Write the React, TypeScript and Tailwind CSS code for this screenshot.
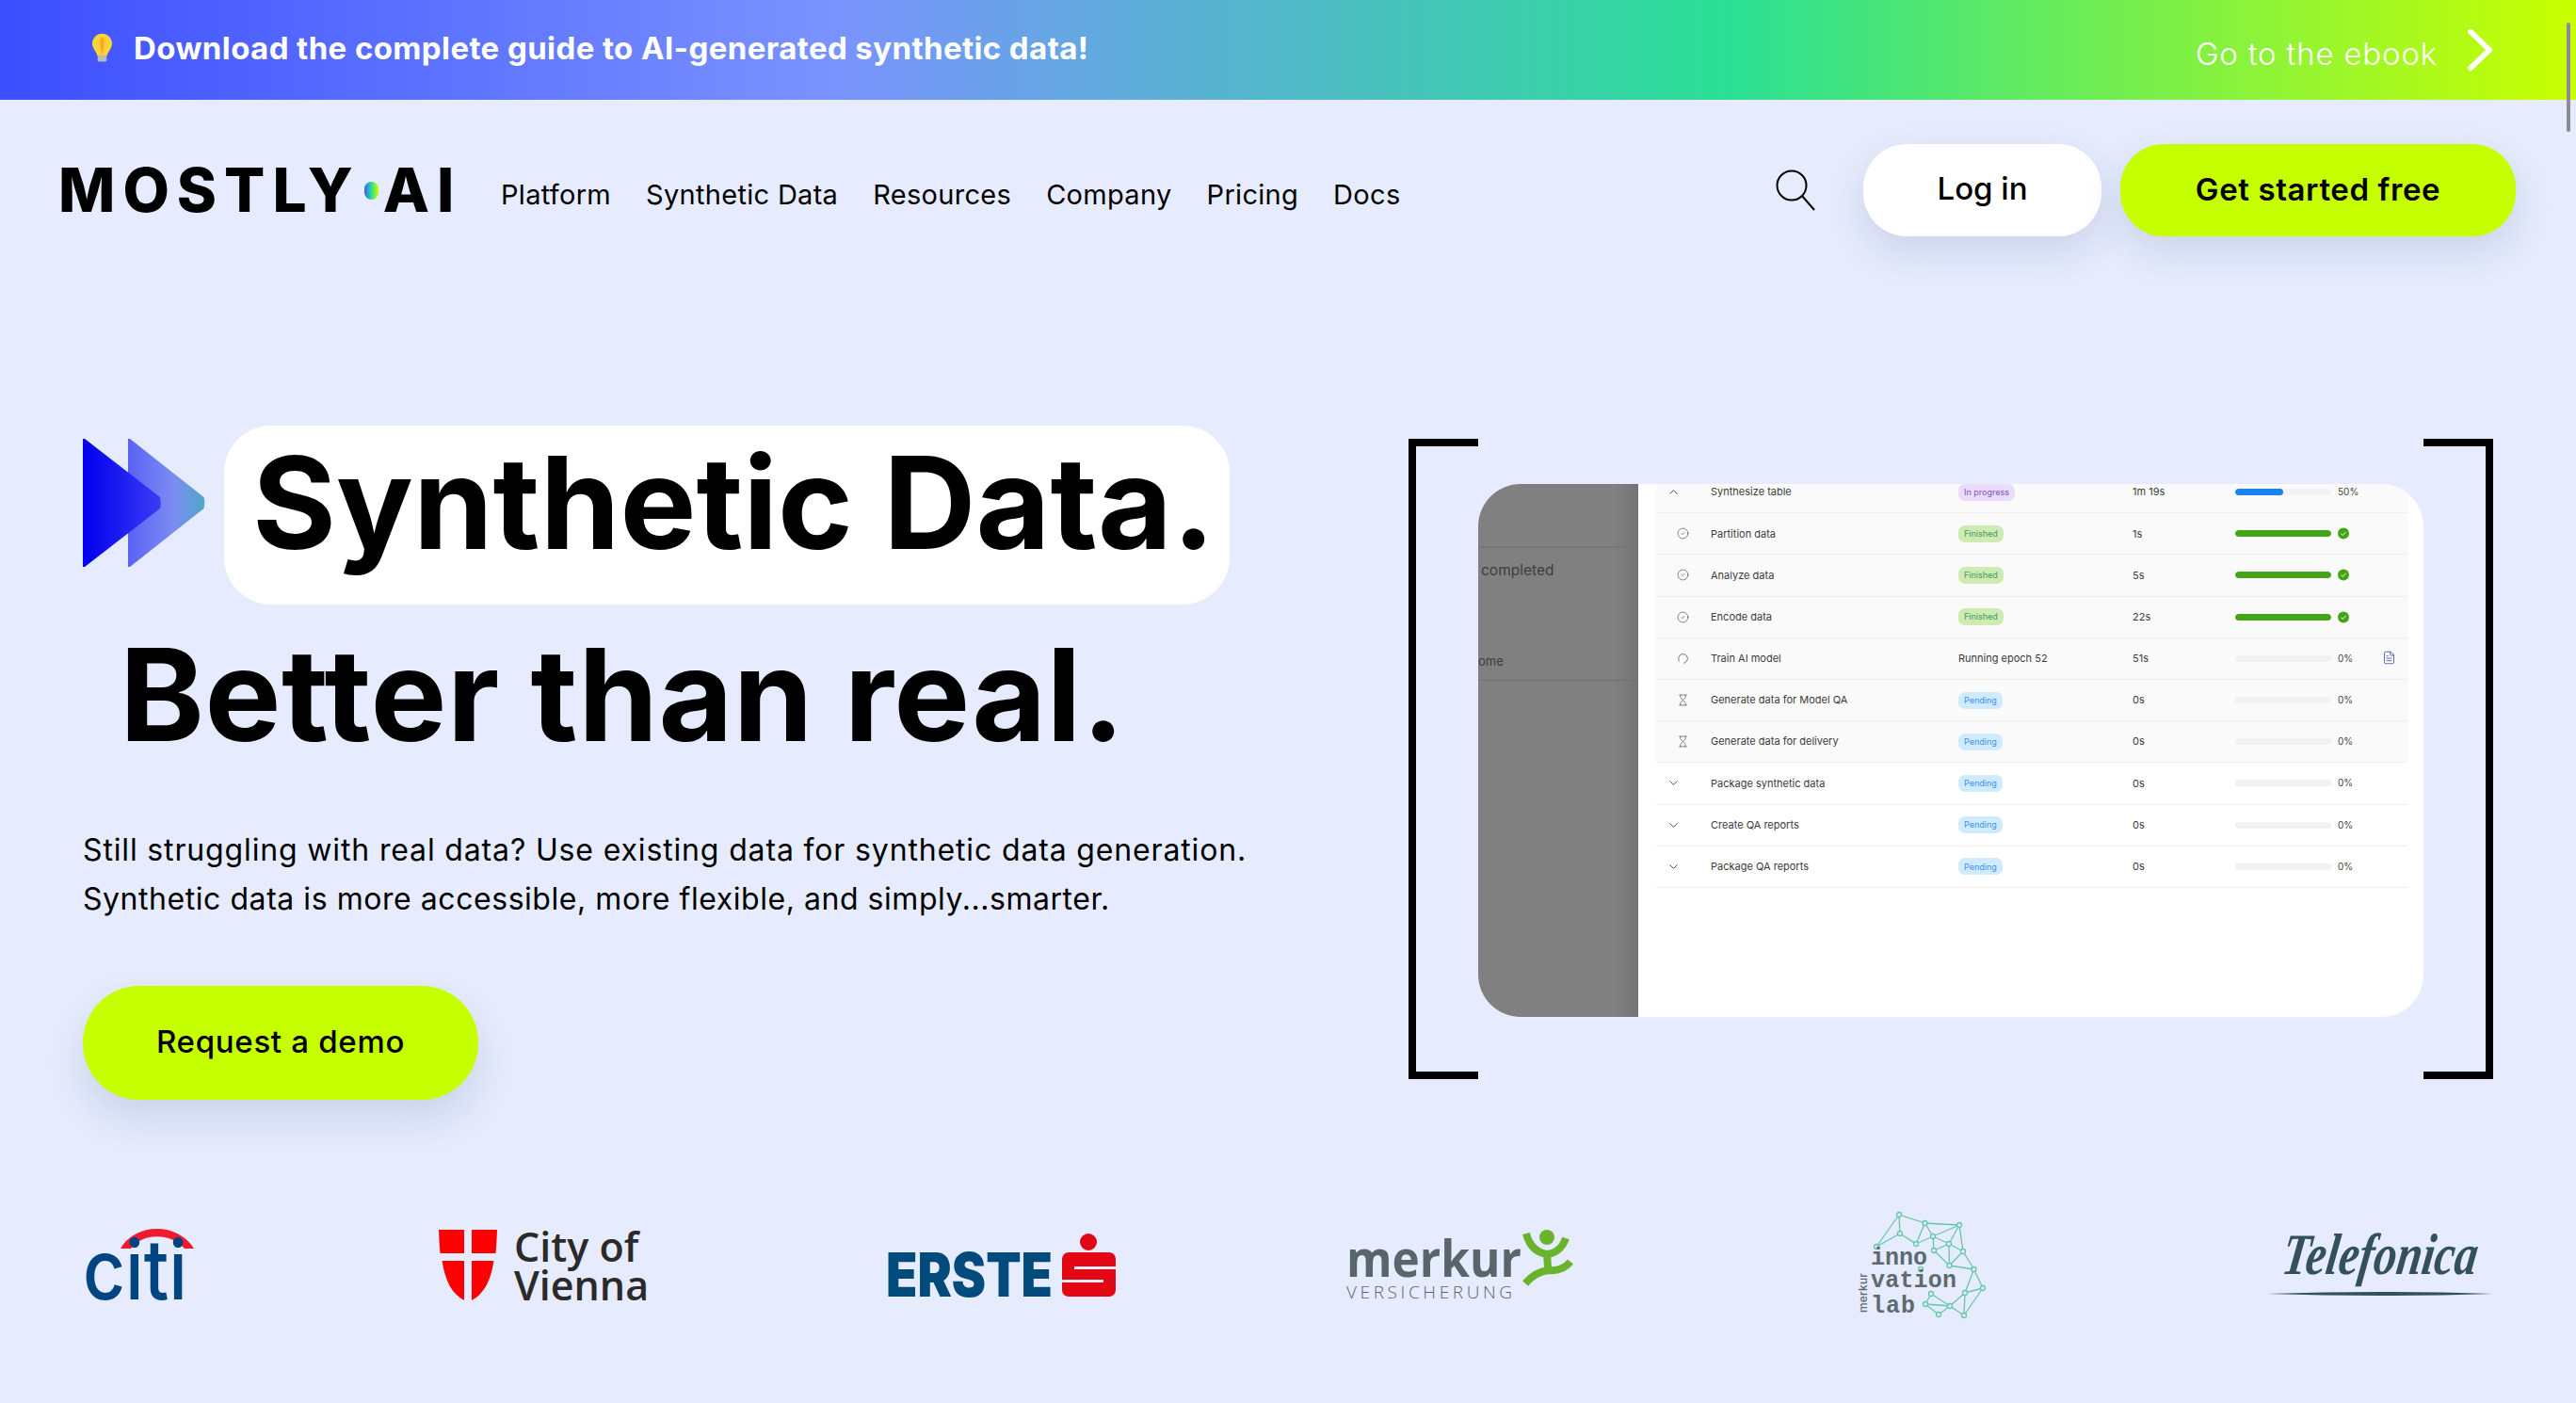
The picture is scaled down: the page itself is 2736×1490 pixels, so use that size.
import { ChevronDown, ChevronUp, CircleCheck, FileText, Hourglass, LoaderCircle } from "lucide-react";

type Row = {
  icon: "up" | "down" | "check" | "spin" | "wait";
  name: string;
  status: string;
  kind: "progress" | "finished" | "pending" | "plain";
  time: string;
  bar: number;
  shaded: boolean;
};

const navItems = ["Platform", "Synthetic Data", "Resources", "Company", "Pricing", "Docs"];

const rows: Row[] = [
  { icon: "up", name: "Synthesize table", status: "In progress", kind: "progress", time: "1m 19s", bar: 50, shaded: true },
  { icon: "check", name: "Partition data", status: "Finished", kind: "finished", time: "1s", bar: 100, shaded: true },
  { icon: "check", name: "Analyze data", status: "Finished", kind: "finished", time: "5s", bar: 100, shaded: true },
  { icon: "check", name: "Encode data", status: "Finished", kind: "finished", time: "22s", bar: 100, shaded: true },
  { icon: "spin", name: "Train AI model", status: "Running epoch 52", kind: "plain", time: "51s", bar: 0, shaded: true },
  { icon: "wait", name: "Generate data for Model QA", status: "Pending", kind: "pending", time: "0s", bar: 0, shaded: true },
  { icon: "wait", name: "Generate data for delivery", status: "Pending", kind: "pending", time: "0s", bar: 0, shaded: true },
  { icon: "down", name: "Package synthetic data", status: "Pending", kind: "pending", time: "0s", bar: 0, shaded: false },
  { icon: "down", name: "Create QA reports", status: "Pending", kind: "pending", time: "0s", bar: 0, shaded: false },
  { icon: "down", name: "Package QA reports", status: "Pending", kind: "pending", time: "0s", bar: 0, shaded: false },
];

const pillClass = {
  progress: "h-[18px] rounded-[7px] bg-[#ebdcfb] px-[6px] text-[9px] text-[#7b52c4]",
  finished: "h-[18px] rounded-[7px] bg-[#cfeab3] px-[6px] text-[9px] text-[#3f9c5e]",
  pending: "h-[18px] rounded-[7px] bg-[#d0eaff] px-[6px] text-[9px] text-[#3a94e8]",
  plain: "text-[11px] text-[#3a3a3a]",
};

function RowIcon({ icon }: { icon: Row["icon"] }) {
  if (icon === "up") return <ChevronUp size={15} strokeWidth={1.3} className="ml-[11px] text-[#222]" />;
  if (icon === "down") return <ChevronDown size={15} strokeWidth={1.3} className="ml-[11px] text-[#222]" />;
  if (icon === "check") return <CircleCheck size={13} strokeWidth={1.2} className="ml-[22px] text-[#444]" />;
  if (icon === "spin") return <LoaderCircle size={13} strokeWidth={1.2} className="ml-[22px] rotate-[150deg] text-[#444]" />;
  return <Hourglass size={13} strokeWidth={1.2} className="ml-[22px] text-[#444]" />;
}

function JobRow({ row }: { row: Row }) {
  return (
    <div className={`flex h-[44.2px] items-center border-b border-[#efefef] ${row.shaded ? "bg-[#fafafa]" : "bg-white"}`}>
      <div className="w-[58px] shrink-0">
        <RowIcon icon={row.icon} />
      </div>
      <div className="w-[263px] shrink-0 text-[11px] text-[#3a3a3a]">{row.name}</div>
      <div className="flex w-[185px] shrink-0 items-center">
        <span className={`inline-flex items-center ${pillClass[row.kind]}`}>{row.status}</span>
      </div>
      <div className="w-[109px] shrink-0 text-[11px] text-[#3a3a3a]">{row.time}</div>
      <div className="h-[7px] w-[102px] shrink-0 overflow-hidden rounded-full bg-[#f2f2f2]">
        <div className={`h-full rounded-full ${row.bar === 100 ? "bg-[#43a516]" : "bg-[#1883f0]"}`} style={{ width: `${row.bar}%` }} />
      </div>
      <div className="ml-[7px] flex w-[44px] shrink-0 items-center text-[10px] text-[#444]">
        {row.bar === 100 ? (
          <svg viewBox="0 0 12 12" className="h-[13px] w-[12px]">
            <circle cx="6" cy="6" r="6" fill="#43a516" />
            <path d="M3.5 6.2l1.8 1.8 3.2-3.6" fill="none" stroke="#fff" strokeWidth="0.9" />
          </svg>
        ) : (
          `${row.bar}%`
        )}
      </div>
      {row.kind === "plain" && <FileText size={15} strokeWidth={1.3} className="ml-[3px] -mt-[2px] text-[#3c4aa8]" />}
    </div>
  );
}

function ArrowMark() {
  return (
    <svg viewBox="0 0 130 136" className="mb-[26px] h-[136px] w-[130px] shrink-0">
      <defs>
        <linearGradient id="arrowFront" x1="0" x2="1" y1="0" y2="0">
          <stop offset="0" stopColor="#0000ee" />
          <stop offset="1" stopColor="#3a3cf5" />
        </linearGradient>
        <linearGradient id="arrowBack" x1="0" x2="1" y1="0" y2="0">
          <stop offset="0" stopColor="#5a62f6" />
          <stop offset="0.6" stopColor="#7a8df2" />
          <stop offset="1" stopColor="#4fa8c8" />
        </linearGradient>
      </defs>
      <path d="M48 0h2l78.500 62q1.500 6 0 12L50 136h-2z" fill="url(#arrowBack)" />
      <path d="M0 0h2l80 62q1.500 6 0 12L2 136H0z" fill="url(#arrowFront)" />
    </svg>
  );
}

function CitiLogo() {
  return (
    <svg viewBox="0 0 118 78" className="h-[78px] w-[118px] shrink-0 overflow-visible">
      <path d="M40 21C56-7 101-7 118 21h-10C94 4 63 4 51 21z" fill="#ee1c2e" />
      <text x="0" y="75" textLength="111" lengthAdjust="spacingAndGlyphs" fontFamily="Inter" fontWeight="500" fontSize="88" fill="#004481">citi</text>
    </svg>
  );
}

function ViennaLogo() {
  return (
    <div className="flex shrink-0 items-center gap-[18px]">
      <svg viewBox="0 0 62 75" className="h-[75px] w-[62px]">
        <path d="M0 0h27v25H1.500Q.3 12 0 0zM35 0h27q-.3 12-1.500 25H35zM3.500 33H27v42C14 68 7 55 3.500 33zM35 33h23.500C55 55 48 68 35 75z" fill="#f00" />
      </svg>
      <div className="font-['Open_Sans',sans-serif] text-[43px] font-semibold leading-[41px] text-[#2a2a2a]">
        <div>City of</div>
        <div>Vienna</div>
      </div>
    </div>
  );
}

function ErsteLogo() {
  return (
    <svg viewBox="0 0 244 68" className="h-[68px] w-[244px] shrink-0 overflow-visible">
      <text x="0" y="67" textLength="177" lengthAdjust="spacingAndGlyphs" fontFamily="Inter" fontWeight="900" fontSize="65" fill="#004b7c">ERSTE</text>
      <g transform="translate(3 0)">
        <ellipse cx="212" cy="9" rx="9" ry="9" fill="#e30613" />
        <path d="M184 27a7 7 0 0 1 7-7h43a7 7 0 0 1 7 7v33a7 7 0 0 1-7 7h-43a7 7 0 0 1-7-7z" fill="#e30613" />
        <path d="M197 35h44v3h-44zM184 49h44v3h-44z" fill="#e6ecfd" />
      </g>
    </svg>
  );
}

function MerkurLogo() {
  return (
    <svg viewBox="0 0 242 76" className="h-[76px] w-[242px] shrink-0 overflow-visible">
      <text x="0" y="50" textLength="186" lengthAdjust="spacingAndGlyphs" fontFamily="Open Sans" fontWeight="700" fontSize="54" fill="#58666b">merkur</text>
      <text x="0" y="73" textLength="176" lengthAdjust="spacing" fontFamily="Open Sans" fontWeight="300" fontSize="19" fill="#58666b">VERSICHERUNG</text>
      <ellipse cx="213" cy="8" rx="8" ry="8" fill="#6ab42d" />
      <path d="M191 4c3 12 10 20 22 22 10-1 17-8 20-17M213 26c1 6 0 12 2 17 10 1 17-2 23-9M215 43c-10 1-18 6-25 14" fill="none" stroke="#6ab42d" strokeWidth="8" />
    </svg>
  );
}

const innoNodes: [number, number][] = [
  [46, 5], [73.500, 14], [110, 16], [47, 25], [82, 28], [64, 36], [22, 39], [99, 36], [83, 43], [114, 44],
  [99.500, 59], [125.500, 63], [69, 63], [135, 83], [116, 88], [80, 89], [74, 100], [100, 102], [88, 111], [115, 112],
];

const innoEdges: [number, number][] = [
  [0, 1], [0, 3], [0, 6], [1, 2], [1, 4], [1, 5], [2, 4], [2, 9], [2, 7], [3, 5], [3, 6], [4, 5], [4, 7], [4, 8],
  [7, 8], [7, 9], [7, 10], [8, 10], [9, 10], [9, 11], [10, 11], [11, 13], [11, 14], [13, 14], [13, 19], [14, 17],
  [14, 19], [15, 16], [15, 17], [16, 17], [16, 18], [17, 18], [17, 19],
];

function InnoLogo() {
  return (
    <svg viewBox="0 0 140 118" className="h-[118px] w-[140px] shrink-0 overflow-visible">
      {innoEdges.map(([a, b]) => (
        <line key={`${a}-${b}`} x1={innoNodes[a][0]} y1={innoNodes[a][1]} x2={innoNodes[b][0]} y2={innoNodes[b][1]} stroke="#66c6a8" strokeWidth="1.300" />
      ))}
      {innoNodes.map(([x, y]) => (
        <circle key={`${x}-${y}`} cx={x} cy={y} r="2.500" fill="#e6ecfd" stroke="#66c6a8" strokeWidth="1.300" />
      ))}
      <g fontFamily="Liberation Mono" fontWeight="700" fontSize="25" fill="#5d6b71">
        <text x="16" y="58" textLength="60">inno</text>
        <text x="16" y="82" textLength="91">vation</text>
        <text x="16" y="109" textLength="47">lab</text>
      </g>
      <text transform="translate(12 109) rotate(-90)" textLength="42" fontFamily="Inter" fontWeight="500" fontSize="12" fill="#5d6b71">merkur</text>
    </svg>
  );
}

function TelefonicaLogo() {
  return (
    <svg viewBox="0 0 240 80" className="h-[80px] w-[240px] shrink-0 overflow-visible">
      <text x="21" y="49" transform="skewX(-8)" textLength="207" lengthAdjust="spacingAndGlyphs" fontFamily="Liberation Serif" fontStyle="italic" fontWeight="700" fontSize="62" fill="#34505c">Telefonica</text>
      <path d="M0 70Q120 66 240 70Q120 74 0 70z" fill="#34505c" />
    </svg>
  );
}

export default function App() {
  return (
    <div className="relative h-[1490px] overflow-hidden bg-[#e6ecfd] font-['Inter',sans-serif] text-black">
      {/* top banner */}
      <div className="flex h-[106px] items-center justify-between bg-[linear-gradient(90deg,#3d4eff_0%,#7a92ff_32%,#2adf95_67%,#c8ff00_100%)] pl-[97px] pr-[88px]">
        <div className="flex items-center gap-[22px] pb-[4px]">
          <svg viewBox="0 0 24 32" className="h-[32px] w-[23px]">
            <path d="M12 0c6 0 11 5 11 11 0 5-4 8-6 14H7C5 19 1 16 1 11 1 5 6 0 12 0z" fill="#ffd23a" />
            <path d="M12 3c2 3 3 6 2 10l-2 12-2-12c-1-4 0-7 2-10z" fill="#f9a81c" />
            <rect x="7" y="25" width="10" height="6" rx="1.500" fill="#b7bac4" />
          </svg>
          <span className="text-[33px] font-bold leading-none tracking-[0.4px] text-white">Download the complete guide to AI-generated synthetic data!</span>
        </div>
        <div className="flex items-center gap-[32px]">
          <span className="pt-[9px] text-[33px] font-light leading-none tracking-[0.8px] text-white">Go to the ebook</span>
          <svg viewBox="0 0 28 46" className="h-[46px] w-[27px]">
            <path d="M3 3l21 20L3 43" fill="none" stroke="#fff" strokeWidth="6" strokeLinecap="round" strokeLinejoin="round" />
          </svg>
        </div>
      </div>

      {/* header */}
      <div className="flex h-[192px] items-center pl-[62px] pr-[64px]">
        <div className="flex w-[470px] shrink-0 items-center text-[64px] font-extrabold leading-none tracking-[8px]">
          <span>MOSTLY</span>
          <span className="ml-[4px] mr-[5px] h-[19px] w-[15px] rounded-full bg-[linear-gradient(90deg,#3d5bff,#2adf95,#c8ff00)]" />
          <span>AI</span>
        </div>
        <nav className="flex gap-[37px] pt-[8px] text-[29px] leading-none tracking-[0.3px]">
          {navItems.map((item) => (
            <a key={item}>{item}</a>
          ))}
        </nav>
        <svg viewBox="0 0 42 44" className="ml-auto h-[44px] w-[42px]">
          <circle cx="17" cy="17" r="15.500" fill="none" stroke="#000" strokeWidth="2" />
          <path d="M28 28l13 15" stroke="#000" strokeWidth="2" />
        </svg>
        <button className="ml-[51px] h-[98px] w-[253px] rounded-[46px] bg-white pb-[2px] text-[33px] font-medium shadow-[0_16px_40px_rgba(40,60,120,0.14)]">Log in</button>
        <button className="ml-[20px] h-[98px] w-[420px] rounded-[46px] bg-[#c6ff00] text-[33px] font-semibold tracking-[0.6px] shadow-[0_16px_40px_rgba(40,60,120,0.14)]">Get started free</button>
      </div>

      {/* hero */}
      <div className="flex items-start justify-between pl-[88px] pr-[88px] pt-[154px]">
        <div className="flex flex-col items-start">
          <div className="flex items-center gap-[20px]">
            <ArrowMark />
            <div className="flex h-[190px] w-[1068px] items-center rounded-[50px] bg-white pb-[26px] pl-[30px]">
              <h1 className="text-[136px] font-bold leading-none">Synthetic Data.</h1>
            </div>
          </div>
          <div className="ml-[39px] mt-[21px] text-[136px] font-bold leading-[150px] tracking-[0.5px]">Better than real.</div>
          <p className="mt-[64px] text-[32px] leading-[52px] tracking-[0.85px]">
            Still struggling with real data? Use existing data for synthetic data generation.
            <br />
            <span className="tracking-[0.55px]">Synthetic data is more accessible, more flexible, and simply...smarter.</span>
          </p>
          <button className="mt-[66px] h-[121px] w-[420px] rounded-[60px] bg-[#c6ff00] pb-[2px] text-[33px] font-medium tracking-[0.7px] shadow-[0_20px_40px_rgba(40,60,120,0.14)]">Request a demo</button>
        </div>

        <div className="mt-[14px] flex h-[680px] w-[1152px] shrink-0 items-start">
          <div className="h-full w-[74px] border-y-8 border-l-8 border-black" />
          <div className="mt-[48px] flex h-[566px] w-[1004px] overflow-hidden rounded-[45px] bg-white">
            <div className="w-[170px] shrink-0 bg-[linear-gradient(90deg,#808080_85%,#747474_100%)] text-[#3e3e3e]">
              <div className="h-[68px] border-b-2 border-[#767676]" />
              <div className="mt-[14px] pl-[3px] text-[15.500px] leading-[20px]">completed</div>
              <div className="mt-[78px] text-[13px] leading-[16px]">ome</div>
              <div className="mt-[12px] border-b border-[#707070]" />
            </div>
            <div className="ml-[19px] mr-[17px] -mt-[13px] grow">
              {rows.map((row) => (
                <JobRow key={row.name} row={row} />
              ))}
            </div>
          </div>
          <div className="h-full w-[74px] border-y-8 border-r-8 border-black" />
        </div>
      </div>

      {/* customer logos */}
      <div className="absolute left-0 top-[1287px] flex h-[113px] w-full items-center pl-[88px]">
        <CitiLogo />
        <div className="ml-[260px]">
          <ViennaLogo />
        </div>
        <div className="ml-[252px]">
          <ErsteLogo />
        </div>
        <div className="ml-[245px]">
          <MerkurLogo />
        </div>
        <div className="ml-[299px]">
          <InnoLogo />
        </div>
        <div className="ml-[297px]">
          <TelefonicaLogo />
        </div>
      </div>

      {/* overlay scrollbar */}
      <div className="absolute right-[6px] top-[24px] h-[116px] w-[4px] rounded-full bg-[#8c8c94]" />
    </div>
  );
}
